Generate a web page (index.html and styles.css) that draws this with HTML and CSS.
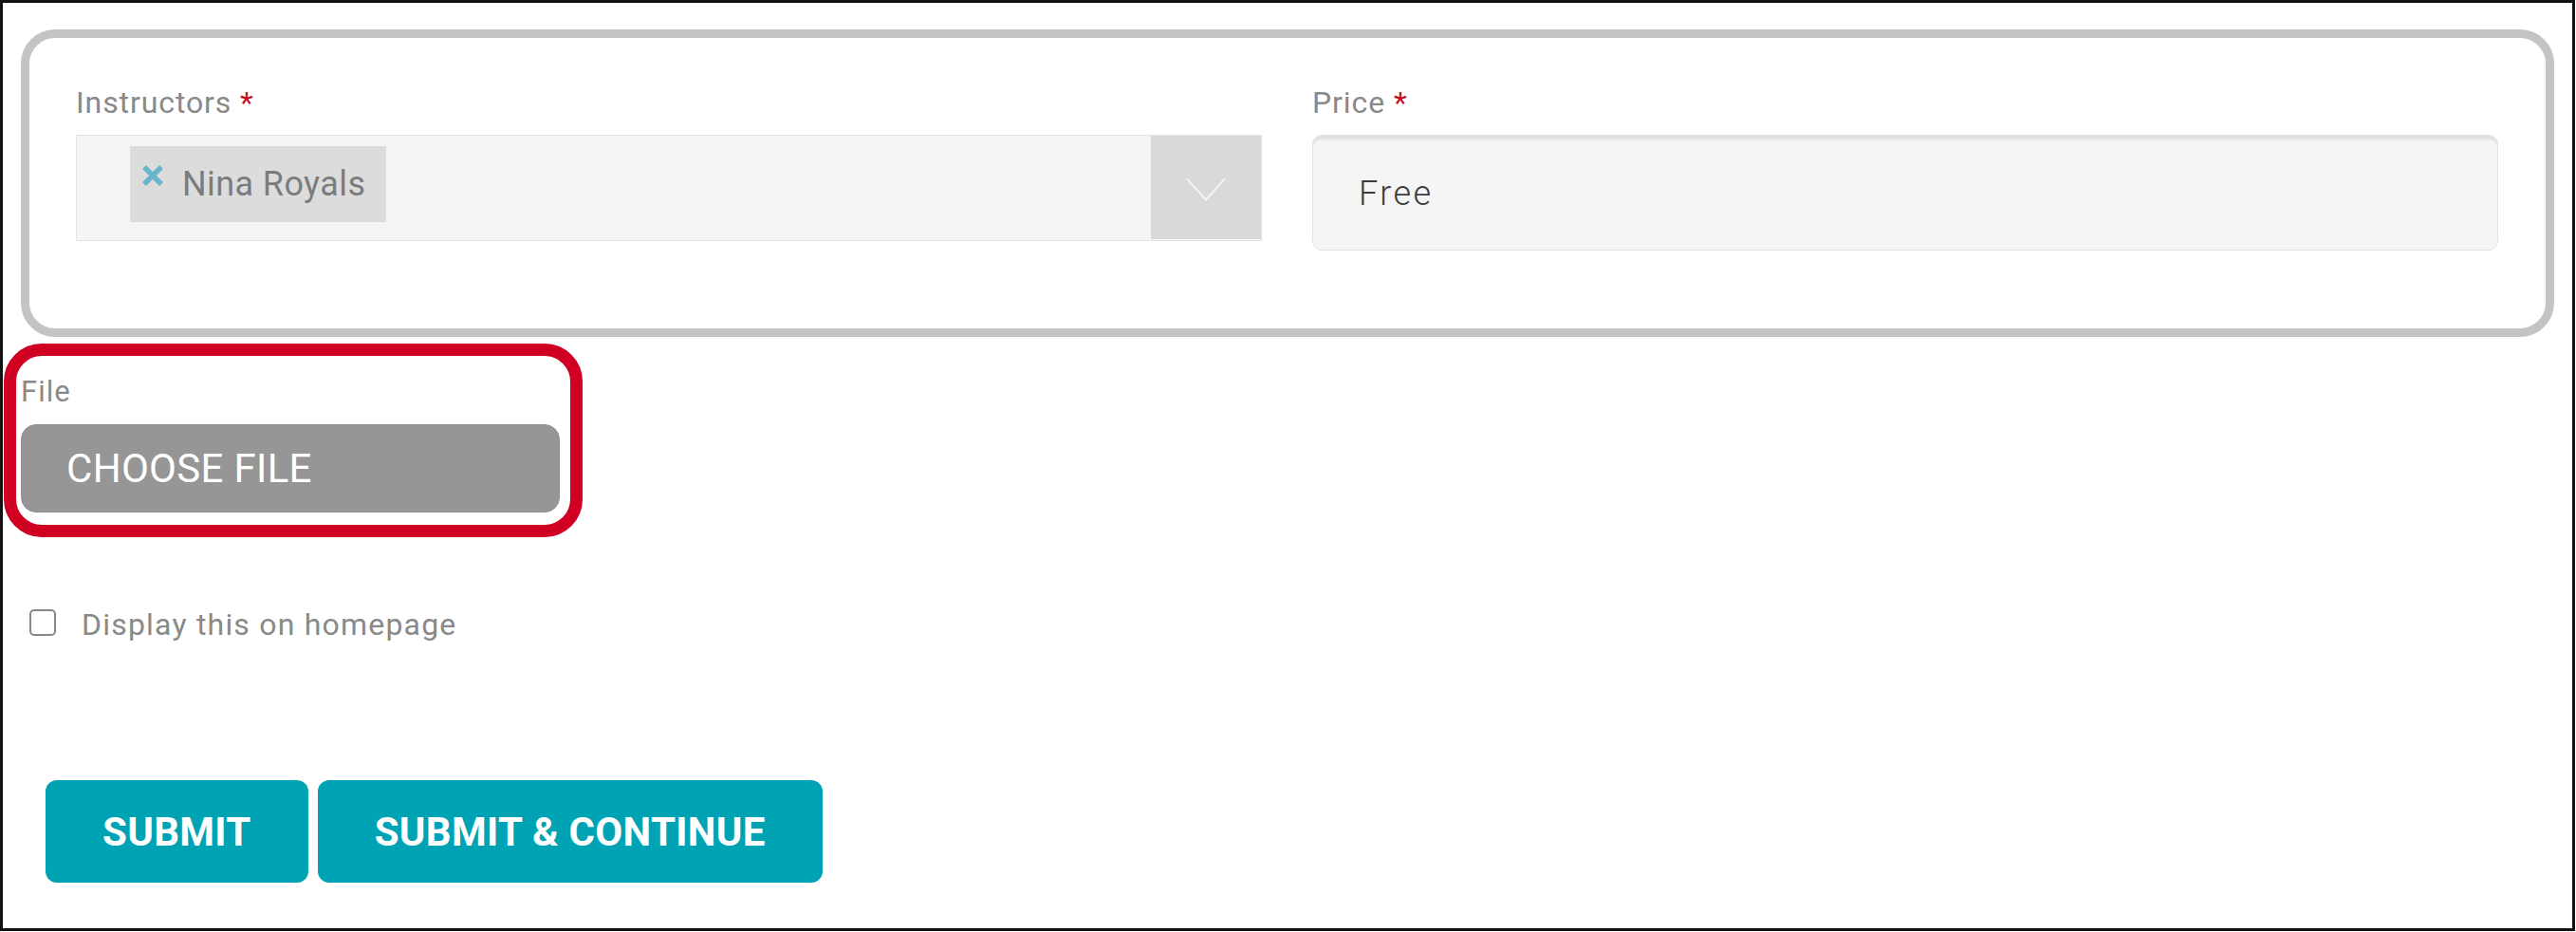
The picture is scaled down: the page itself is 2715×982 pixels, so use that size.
FILE: index.html
```html
<!DOCTYPE html>
<html lang="en">
<head>
<meta charset="utf-8">
<title>Course form</title>
<link rel="stylesheet" href="styles.css">
</head>
<body>
<div class="frame">
  <section class="panel">
    <div class="field">
      <label class="label">Instructors <span class="req">*</span></label>
      <div class="select">
        <div class="select-values">
          <span class="tag">
            <svg class="tag-x" width="24" height="24" viewBox="0 0 24 24" aria-hidden="true"><path d="M3 3 L21 21 M21 3 L3 21" stroke="#69b6cc" stroke-width="5.5" fill="none"/></svg>
            <span class="tag-text">Nina Royals</span>
          </span>
        </div>
        <div class="select-arrow">
          <svg width="42" height="26" viewBox="0 0 42 26" aria-hidden="true"><polyline points="1,1.5 21,23.5 41,1.5" fill="none" stroke="#f3f3f3" stroke-width="2"/></svg>
        </div>
      </div>
    </div>
    <div class="field">
      <label class="label">Price <span class="req">*</span></label>
      <div class="input">Free</div>
    </div>
  </section>

  <div class="file-field">
    <div class="file-label">File</div>
    <button type="button" class="file-btn">CHOOSE FILE</button>
  </div>

  <div class="check-row">
    <span class="checkbox"></span>
    <span class="check-text">Display this on homepage</span>
  </div>

  <div class="actions">
    <button type="button" class="btn">SUBMIT</button>
    <button type="button" class="btn">SUBMIT &amp; CONTINUE</button>
  </div>
</div>
</body>
</html>
```
FILE: styles.css
```css
html, body {
  margin: 0;
  padding: 0;
  background: #ffffff;
}

body {
  font-family: Roboto, "Liberation Sans", Arial, sans-serif;
  color: #888888;
}

.frame {
  box-sizing: border-box;
  width: 2714px;
  height: 981px;
  border: 3px solid #111111;
  padding: 28px 19px 0 19px;
}

.panel {
  border: 9px solid #c4c4c4;
  border-radius: 36px;
  padding: 49px 50px 82px 49px;
  display: grid;
  grid-template-columns: 1fr 1fr;
  column-gap: 53px;
  align-items: start;
}

.label {
  display: block;
  font-size: 32px;
  line-height: 38px;
  letter-spacing: 0.9px;
  color: #898989;
  margin-bottom: 15px;
}

.req {
  color: #c0111b;
}

.select {
  box-sizing: border-box;
  height: 112px;
  border: 1px solid #e4e4e4;
  background: #f5f5f5;
  display: flex;
}

.select-values {
  flex: 1;
  padding: 11px 0 0 56px;
}

.tag {
  box-sizing: border-box;
  display: inline-flex;
  align-items: flex-start;
  height: 80px;
  padding: 19px 22px 0 12px;
  background: #dcdcdc;
}

.tag-x {
  display: block;
  flex: none;
}

.tag-text {
  margin-left: 19px;
  font-size: 36px;
  line-height: 40px;
  letter-spacing: 0.4px;
  color: #7c7c7c;
  margin-top: 1px;
}

.select-arrow {
  width: 116px;
  background: #d9d9d9;
  display: flex;
  align-items: center;
  justify-content: center;
  margin-bottom: 1px;
}

.select-arrow svg {
  display: block;
  margin-top: 4px;
}

.input {
  box-sizing: border-box;
  height: 122px;
  border: 1px solid #e3e3e3;
  border-radius: 10px;
  background: #f5f5f5;
  box-shadow: inset 0 5px 2px -1px #e0e0e0;
  display: flex;
  align-items: center;
  padding: 2px 0 0 48px;
  font-size: 36px;
  font-weight: 300;
  letter-spacing: 2.4px;
  color: #3c3c3c;
}

.file-field {
  position: relative;
  width: 568px;
  margin-top: 40px;
}

.file-field::after {
  content: "";
  position: absolute;
  left: -18px;
  right: -24px;
  top: -33px;
  bottom: -26px;
  border: 13px solid #cf0021;
  border-radius: 40px;
  pointer-events: none;
}

.file-label {
  font-size: 31px;
  line-height: 36px;
  letter-spacing: 1px;
  color: #898989;
  margin-bottom: 16px;
}

.file-btn {
  box-sizing: border-box;
  display: block;
  width: 568px;
  height: 93px;
  border: 1px solid #8f8f8f;
  border-radius: 16px;
  background: #969696;
  color: #ffffff;
  font-family: Roboto, "Liberation Sans", Arial, sans-serif;
  font-size: 42px;
  letter-spacing: 0.3px;
  text-align: left;
  padding: 0 0 0 47px;
  cursor: pointer;
}

.check-row {
  display: flex;
  align-items: flex-start;
  margin-top: 98px;
  height: 40px;
}

.checkbox {
  box-sizing: border-box;
  width: 28px;
  height: 28px;
  margin: 4px 0 0 9px;
  border: 2.5px solid #888888;
  border-radius: 5px;
  flex: none;
}

.check-text {
  margin-left: 27px;
  font-size: 32px;
  line-height: 40px;
  letter-spacing: 1.2px;
  color: #898989;
}

.actions {
  display: flex;
  gap: 10px;
  margin: 144px 0 0 26px;
}

.btn {
  box-sizing: border-box;
  height: 108px;
  padding: 0 60px;
  border: none;
  border-radius: 12px;
  background: #00a3b3;
  color: #ffffff;
  font-family: Roboto, "Liberation Sans", Arial, sans-serif;
  font-weight: 700;
  font-size: 42px;
  letter-spacing: 0.3px;
  cursor: pointer;
}
```
